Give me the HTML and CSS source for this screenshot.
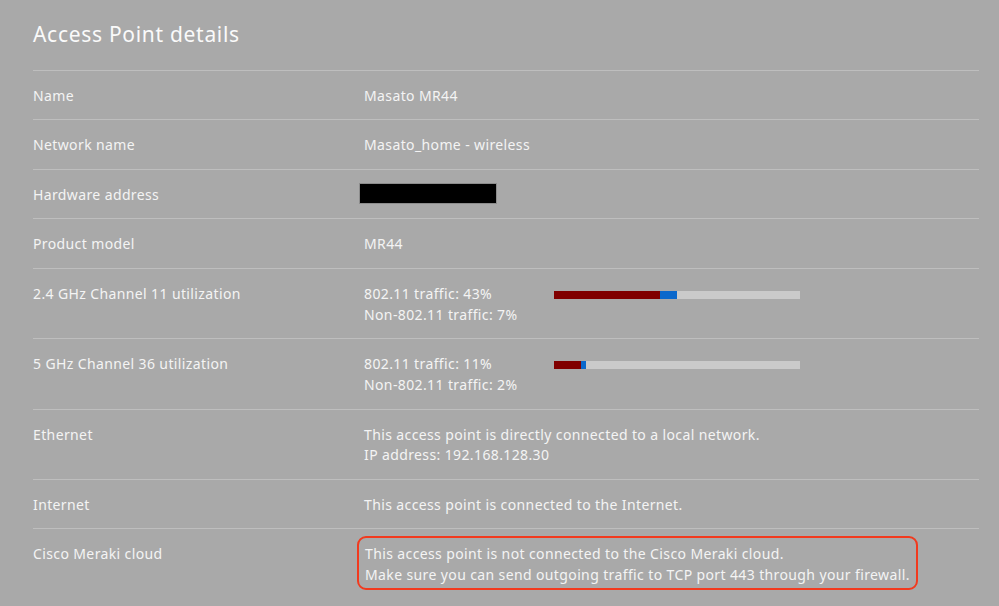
FILE: index.html
```html
<!DOCTYPE html>
<html>
<head>
<meta charset="utf-8">
<link rel="stylesheet" href="styles.css">
</head>
<body>
<div class="page">
  <h1 class="title">Access Point details</h1>
  <div class="table">
    <div class="row"><div class="label">Name</div><div class="value">Masato MR44</div></div>
    <div class="row"><div class="label">Network name</div><div class="value">Masato_home - wireless</div></div>
    <div class="row"><div class="label">Hardware address</div><div class="value"><span class="redact"></span></div></div>
    <div class="row"><div class="label">Product model</div><div class="value">MR44</div></div>
    <div class="row">
      <div class="label">2.4 GHz Channel 11 utilization</div>
      <div class="value util">
        <div class="util-text"><div>802.11 traffic: 43%</div><div>Non-802.11 traffic: 7%</div></div>
        <div class="bar"><span class="seg wifi" style="width:43%"></span><span class="seg non" style="width:7%"></span></div>
      </div>
    </div>
    <div class="row">
      <div class="label">5 GHz Channel 36 utilization</div>
      <div class="value util">
        <div class="util-text"><div>802.11 traffic: 11%</div><div>Non-802.11 traffic: 2%</div></div>
        <div class="bar"><span class="seg wifi" style="width:11%"></span><span class="seg non" style="width:2%"></span></div>
      </div>
    </div>
    <div class="row"><div class="label">Ethernet</div><div class="value"><div>This access point is directly connected to a local network.</div><div>IP address: 192.168.128.30</div></div></div>
    <div class="row"><div class="label">Internet</div><div class="value">This access point is connected to the Internet.</div></div>
    <div class="row row-last"><div class="label">Cisco Meraki cloud</div><div class="value"><div class="alert"><div>This access point is not connected to the Cisco Meraki cloud.</div><div>Make sure you can send outgoing traffic to TCP port 443 through your firewall.</div></div></div></div>
  </div>
</div>
</body>
</html>
```
FILE: styles.css
```css
html, body {
  margin: 0;
  padding: 0;
  background: #a9a9a9;
}
body {
  font-family: "Noto Sans", "Liberation Sans", sans-serif;
  color: #f4f4f4;
  font-size: 14px;
  letter-spacing: 0.38px;
}
.page {
  padding: 0 20px 0 33px;
}
.title {
  margin: 0;
  padding-top: 20px;
  height: 70px;
  box-sizing: border-box;
  font-size: 21px;
  font-weight: 400;
  line-height: 28px;
  color: #fafafa;
  letter-spacing: 0.7px;
}
.table {
  border-top: 1px solid #bebebe;
}
.row {
  display: grid;
  grid-template-columns: 331px 1fr;
  padding: 15px 0 12.7px;
  border-bottom: 1px solid #bebebe;
  line-height: 20.8px;
  min-height: 20.8px;
}
.row-last {
  border-bottom: none;
  padding-bottom: 20px;
}
.value {
  display: flex;
  flex-direction: column;
}
.util {
  flex-direction: row;
  align-items: flex-start;
}
.util-text {
  width: 190px;
}
.bar {
  display: flex;
  width: 246px;
  height: 8px;
  margin-top: 7px;
  background: #cacaca;
}
.seg { display: block; height: 100%; }
.wifi { background: #800000; }
.non { background: #0a68cc; }
.redact {
  display: block;
  width: 138px;
  height: 21px;
  margin: -2px 0 -1px -5px;
  background: #000;
  border: 1px solid #8c8c8c;
  box-sizing: border-box;
}
.alert {
  align-self: flex-start;
  margin: -8px 0 -6px -7px;
  padding: 6px 6px 2px 6px;
  border: 2px solid #f23a1e;
  border-radius: 9px;
}
```
